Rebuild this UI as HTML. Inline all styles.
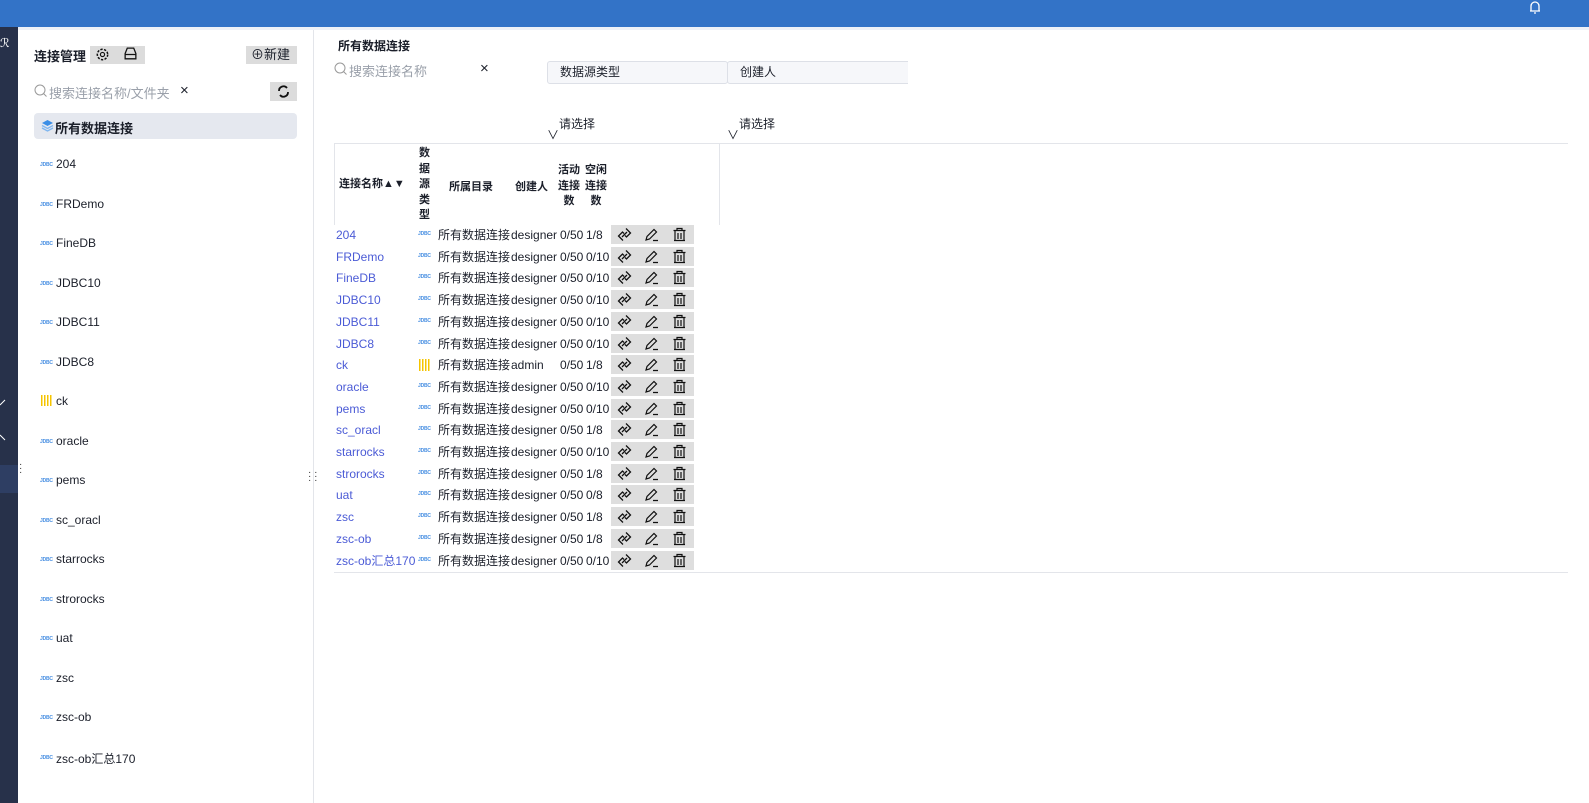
<!DOCTYPE html>
<html><head><meta charset="utf-8"><style>
*{margin:0;padding:0;box-sizing:border-box}
body{width:1589px;height:803px;position:relative;overflow:hidden;background:#fff;font-family:"Liberation Sans","Noto Sans CJK SC",sans-serif;font-size:12px;color:#1b1f2a}
.a{position:absolute;white-space:nowrap}
.j{position:absolute;font-size:5px;font-weight:bold;color:#4a90e2;letter-spacing:-0.2px}
.r{position:absolute;left:0;height:22px;line-height:22px;width:720px}
.lk{color:#4b5bd6}
.act{position:absolute;left:611px;width:83px;height:19px;top:1px;background:#dedede}
.act svg{position:absolute;top:2px}
</style></head><body>
<div class="a" style="left:0;top:0;width:1589px;height:27px;background:#3373c7"></div>
<svg class="a" style="left:1528px;top:0" width="14" height="14" viewBox="0 0 14 14"><path d="M3 11V6a4 4 0 0 1 8 0v5zM2 11h10M6 13h2" stroke="#fff" fill="none" stroke-width="1.3"/></svg>
<div class="a" style="left:0;top:27px;width:18px;height:776px;background:#27314a"></div>
<div class="a" style="left:0;top:465px;width:18px;height:28px;background:#2e3e63"></div>
<div class="a" style="left:0;top:36px;color:#fff;font-size:12px">ℛ</div>
<svg class="a" style="left:0;top:395px" width="8" height="50"><path d="M0 10L5 5M0 40L5 45" stroke="#fff"/></svg>
<div class="a" style="left:18px;top:27px;width:1571px;height:3px;background:#eef1f8"></div>
<div class="a" style="left:313px;top:30px;width:1px;height:773px;background:#e3e5ea"></div>
<div class="a" style="left:19px;top:463px;font-size:10px;line-height:4px;color:#333">·<br>·<br>·</div>
<div class="a" style="left:308px;top:471px;font-size:10px;line-height:4px;color:#333">· ·<br>· ·<br>· ·</div>

<div class="a" style="left:34px;top:46px;font-size:13px;font-weight:bold">连接管理</div>
<div class="a" style="left:90px;top:46px;width:55px;height:18px;background:#dcdcdc"></div>
<svg class="a" style="left:95px;top:47px" width="15" height="15" viewBox="0 0 13 13"><circle cx="6.5" cy="6.5" r="4.5" stroke="#111" fill="none" stroke-width="1.3" stroke-dasharray="2 1.2"/><circle cx="6.5" cy="6.5" r="1.8" stroke="#111" fill="none"/></svg>
<svg class="a" style="left:123px;top:47px" width="15" height="14" viewBox="0 0 14 13"><path d="M2 6L4 1h6l2 5v5H2zM2 7h10" stroke="#111" fill="none" stroke-width="1.2"/></svg>
<div class="a" style="left:246px;top:46px;width:51px;height:18px;background:#dcdcdc;font-size:13px;line-height:18px;padding-left:5px">⊕新建</div>
<svg class="a" style="left:34px;top:84px" width="14" height="14"><circle cx="6" cy="6" r="5" stroke="#999" fill="none"/><path d="M9.5 9.5l3 3" stroke="#999"/></svg>
<div class="a" style="left:49px;top:83px;color:#9aa0aa;font-size:13px">搜索连接名称/文件夹</div>
<div class="a" style="left:180px;top:82px;font-size:15px">×</div>
<div class="a" style="left:270px;top:82px;width:27px;height:19px;background:#dcdcdc"></div>
<svg class="a" style="left:276px;top:84px" width="15" height="15" viewBox="0 0 15 15"><path d="M3 7a4.5 4.5 0 0 1 8-3M12 8a4.5 4.5 0 0 1-8 3" stroke="#111" fill="none" stroke-width="1.8"/></svg>
<div class="a" style="left:34px;top:113px;width:263px;height:26px;background:#e5e8ef;border-radius:4px"></div>
<svg class="a" style="left:41px;top:119px" width="13" height="13" viewBox="0 0 13 13"><path d="M6.5 1L12 4 6.5 7 1 4z" fill="#3a8ee6"/><path d="M1 6.5l5.5 3 5.5-3M1 9l5.5 3 5.5-3" stroke="#7fb6f0" fill="none" stroke-width="1.3"/></svg>
<div class="a" style="left:55px;top:118px;font-size:13px;font-weight:bold">所有数据连接</div>

<div class="j" style="left:40px;top:162px">JDBC</div><div class="a" style="left:56px;top:157px">204</div>
<div class="j" style="left:40px;top:202px">JDBC</div><div class="a" style="left:56px;top:197px">FRDemo</div>
<div class="j" style="left:40px;top:241px">JDBC</div><div class="a" style="left:56px;top:236px">FineDB</div>
<div class="j" style="left:40px;top:281px">JDBC</div><div class="a" style="left:56px;top:276px">JDBC10</div>
<div class="j" style="left:40px;top:320px">JDBC</div><div class="a" style="left:56px;top:315px">JDBC11</div>
<div class="j" style="left:40px;top:360px">JDBC</div><div class="a" style="left:56px;top:355px">JDBC8</div>
<div class="a" style="left:41px;top:395px;width:11px;height:11px;background:repeating-linear-gradient(90deg,#f5c400 0 1.5px,transparent 1.5px 3px)"></div><div class="a" style="left:56px;top:394px">ck</div>
<div class="j" style="left:40px;top:439px">JDBC</div><div class="a" style="left:56px;top:434px">oracle</div>
<div class="j" style="left:40px;top:478px">JDBC</div><div class="a" style="left:56px;top:473px">pems</div>
<div class="j" style="left:40px;top:518px">JDBC</div><div class="a" style="left:56px;top:513px">sc_oracl</div>
<div class="j" style="left:40px;top:557px">JDBC</div><div class="a" style="left:56px;top:552px">starrocks</div>
<div class="j" style="left:40px;top:597px">JDBC</div><div class="a" style="left:56px;top:592px">strorocks</div>
<div class="j" style="left:40px;top:636px">JDBC</div><div class="a" style="left:56px;top:631px">uat</div>
<div class="j" style="left:40px;top:676px">JDBC</div><div class="a" style="left:56px;top:671px">zsc</div>
<div class="j" style="left:40px;top:715px">JDBC</div><div class="a" style="left:56px;top:710px">zsc-ob</div>
<div class="j" style="left:40px;top:755px">JDBC</div><div class="a" style="left:56px;top:750px">zsc-ob汇总170</div>

<div class="a" style="left:338px;top:37px;font-weight:bold;font-size:12px">所有数据连接</div>
<svg class="a" style="left:334px;top:62px" width="14" height="14"><circle cx="6" cy="6" r="5" stroke="#999" fill="none"/><path d="M9.5 9.5l3 3" stroke="#999"/></svg>
<div class="a" style="left:349px;top:61px;color:#9aa0aa;font-size:13px">搜索连接名称</div>
<div class="a" style="left:480px;top:60px;font-size:15px">×</div>
<div class="a" style="left:547px;top:61px;width:181px;height:23px;background:#f6f7fa;border:1px solid #dde0e7;border-radius:3px;padding-left:12px;line-height:21px">数据源类型</div>
<div class="a" style="left:727px;top:61px;width:181px;height:23px;background:#f6f7fa;border:1px solid #dde0e7;border-right:none;border-radius:3px 0 0 3px;padding-left:12px;line-height:21px">创建人</div>
<div class="a" style="left:559px;top:115px">请选择</div><div class="a" style="left:547px;top:126px">∨</div>
<div class="a" style="left:739px;top:115px">请选择</div><div class="a" style="left:727px;top:126px">∨</div>

<div class="a" style="left:334px;top:143px;width:1234px;height:430px;border-top:1px solid #e3e5ea;border-bottom:1px solid #e3e5ea"></div>
<div class="a" style="left:334px;top:143px;width:386px;height:82px;border-left:1px solid #e3e5ea;border-right:1px solid #e3e5ea"></div>
<div class="a" style="left:339px;top:175px;font-weight:bold;font-size:11px">连接名称▲▼</div>
<div class="a" style="left:419px;top:146px;font-weight:bold;font-size:11px;line-height:15.5px">数<br>据<br>源<br>类<br>型</div>
<div class="a" style="left:449px;top:178px;font-weight:bold;font-size:11px">所属目录</div>
<div class="a" style="left:515px;top:178px;font-weight:bold;font-size:11px">创建人</div>
<div class="a" style="left:558px;top:163px;font-weight:bold;font-size:11px;line-height:15.5px;text-align:center">活动<br>连接<br>数</div>
<div class="a" style="left:585px;top:163px;font-weight:bold;font-size:11px;line-height:15.5px;text-align:center">空闲<br>连接<br>数</div>

<div id="rows" class="a" style="left:334px;top:224px;width:720px;height:350px">
<svg width="0" height="0" style="position:absolute"><defs>
<g id="l"><path d="M9 1.5l4.5 4.5-4 4-1.5-1.5M6 13.5L1.5 9l4-4 1.5 1.5M5 10l5-5" stroke="#111" fill="none" stroke-width="1.3"/></g>
<g id="p"><path d="M2 13l1-3.5 7-7 2.5 2.5-7 7zM9 13.5h5" stroke="#111" fill="none" stroke-width="1.2"/></g>
<g id="t"><path d="M1.5 3.5h12M5 3.5V1.5h5v2M3 3.5v10h9v-10M6 6v6M9 6v6M2 13.5h11" stroke="#111" fill="none" stroke-width="1.2"/></g>
</defs></svg>
</div>
<script>
var d=[["204","designer","1/8"],["FRDemo","designer","0/10"],["FineDB","designer","0/10"],["JDBC10","designer","0/10"],["JDBC11","designer","0/10"],["JDBC8","designer","0/10"],["ck","admin","1/8"],["oracle","designer","0/10"],["pems","designer","0/10"],["sc_oracl","designer","1/8"],["starrocks","designer","0/10"],["strorocks","designer","1/8"],["uat","designer","0/8"],["zsc","designer","1/8"],["zsc-ob","designer","1/8"],["zsc-ob汇总170","designer","0/10"]];
var h="";d.forEach(function(r,i){var t=i*21.7;var ic=r[0]=="ck"?'<div class="a" style="left:85px;top:5px;width:12px;height:12px;background:repeating-linear-gradient(90deg,#f5c400 0 1.5px,transparent 1.5px 3px)"></div>':'<div class="j" style="left:84px;top:-1px">JDBC</div>';
h+='<div class="r" style="top:'+t+'px"><span class="a lk" style="left:2px">'+r[0]+'</span>'+ic+'<span class="a" style="left:104px">所有数据连接</span><span class="a" style="left:177px">'+r[1]+'</span><span class="a" style="left:226px">0/50</span><span class="a" style="left:252px">'+r[2]+'</span><div class="act" style="left:277px"><svg style="left:6px" width="16" height="16"><use href="#l"/></svg><svg style="left:33px" width="16" height="16"><use href="#p"/></svg><svg style="left:61px" width="16" height="16"><use href="#t"/></svg></div></div>';});
document.getElementById("rows").insertAdjacentHTML("beforeend",h);
</script>
</body></html>
